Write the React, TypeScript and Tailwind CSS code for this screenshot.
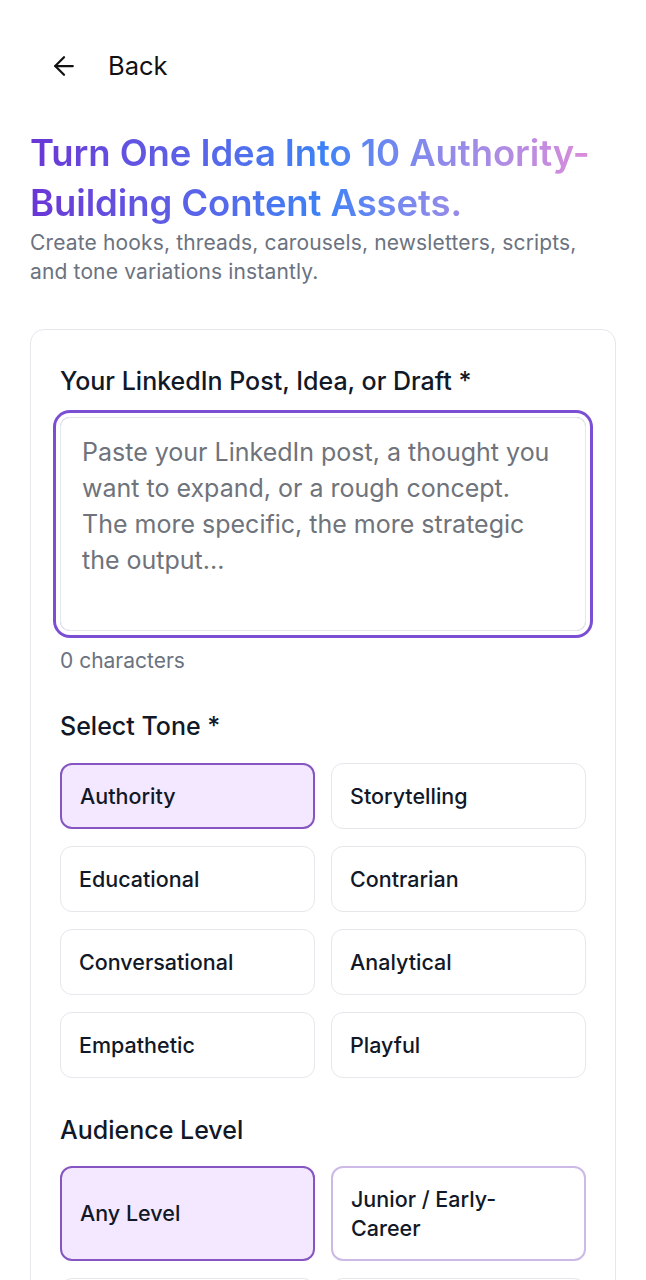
import { useState } from 'react';
import { ArrowLeft } from 'lucide-react';

const TONES = [
  'Authority',
  'Storytelling',
  'Educational',
  'Contrarian',
  'Conversational',
  'Analytical',
  'Empathetic',
  'Playful',
];

const LEVELS = ['Any Level', 'Junior / Early-Career', 'Mid-Level Professionals', 'Senior / Executive'];

export default function App() {
  const [text, setText] = useState('');
  const [tone, setTone] = useState('Authority');
  const [level, setLevel] = useState('Any Level');

  return (
    <div className="min-h-screen bg-white px-[30px] pb-10 text-[#111827] font-['Inter','Noto_Sans',sans-serif]">
      {/* back */}
      <div className="pt-[51px]">
        <button className="flex items-center gap-[29px] pl-[19px] text-[25.5px] leading-[30px] text-[#111]">
          <ArrowLeft className="w-[30px] h-[30px]" strokeWidth={1.8} />
          Back
        </button>
      </div>

      {/* hero */}
      <h1 className="mt-[47px] text-[36.5px] leading-[50px] font-semibold tracking-[-0.1px] bg-gradient-to-r from-[#6a35d6] via-[#3b82f6] to-[#e88bd6] bg-clip-text text-transparent">
        Turn One Idea Into 10 Authority-Building Content Assets.
      </h1>
      <p className="text-[21px] leading-[29px] tracking-[0.15px] text-[#6b7280]">
        Create hooks, threads, carousels, newsletters, scripts, and tone variations instantly.
      </p>

      {/* form card */}
      <div className="mt-[43px] rounded-[14px] border border-[#e5e7eb] px-[29px] pt-[36px] pb-8">
        <label className="block text-[25px] leading-[30px] font-medium">
          Your LinkedIn Post, Idea, or Draft *
        </label>
        <textarea
          value={text}
          onChange={(e) => setText(e.target.value)}
          autoFocus
          placeholder="Paste your LinkedIn post, a thought you want to expand, or a rough concept. The more specific, the more strategic the output..."
          className="mt-[21px] block w-full h-[214px] resize-none rounded-[10px] border border-[#e5e7eb] pl-[21px] pr-[30px] py-[16px] text-[25px] leading-[36px] text-[#111827] placeholder:text-[#6f737b] outline-none ring-[3px] ring-[#7b4ed3] ring-offset-[4px] ring-offset-white"
        />
        <div className="mt-[17px] text-[21px] leading-[26px] text-[#6b7280]">{text.length} characters</div>

        <h2 className="mt-[37px] text-[25px] leading-[30px] font-medium">Select Tone *</h2>
        <div className="mt-[22px] grid grid-cols-2 gap-x-[16px] gap-y-[17px]">
          {TONES.map((t) => {
            const active = t === tone;
            return (
              <button
                key={t}
                onClick={() => setTone(t)}
                className={`h-[66px] rounded-[12px] px-[18px] text-left text-[21.5px] font-medium ${
                  active
                    ? 'border-2 border-[#8556c2] bg-[#f3e8ff]'
                    : 'border-[1.5px] border-[#e5e7eb] bg-white'
                }`}
              >
                {t}
              </button>
            );
          })}
        </div>

        <h2 className="mt-[37px] text-[25px] leading-[30px] font-medium">Audience Level</h2>
        <div className="mt-[21px] grid grid-cols-2 gap-x-[16px] gap-y-[17px]">
          {LEVELS.map((l, i) => {
            const active = l === level;
            return (
              <button
                key={l}
                onClick={() => setLevel(l)}
                className={`h-[95px] rounded-[12px] pl-[18px] pr-[26px] text-left text-[21.5px] leading-[29px] font-medium ${
                  active
                    ? 'border-2 border-[#8556c2] bg-[#f3e8ff]'
                    : i === 1
                    ? 'border-2 border-[#cdb9e6] bg-white'
                    : 'border-[1.5px] border-[#e5e7eb] bg-white'
                }`}
              >
                {l}
              </button>
            );
          })}
        </div>
      </div>
    </div>
  );
}
